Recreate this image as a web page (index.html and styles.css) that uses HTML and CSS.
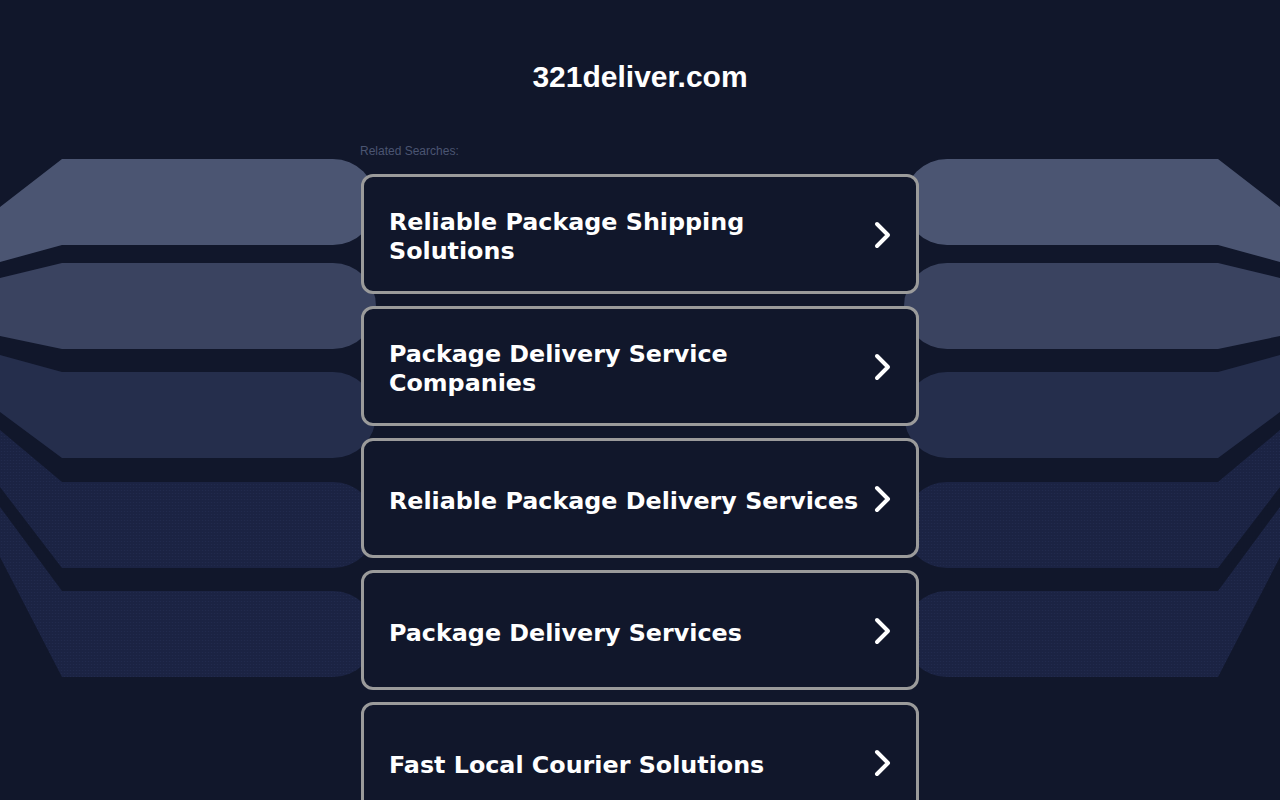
FILE: index.html
```html
<!DOCTYPE html>
<html>
<head>
	<meta charset="UTF-8">
	<title>321deliver.com</title>
	<link rel="stylesheet" href="styles.css">
</head>
<body>
	<svg class="backdrop" width="1280" height="800" viewBox="0 0 1280 800">
		<defs>
			<pattern id="dots" width="3" height="3" patternUnits="userSpaceOnUse">
				<rect width="3" height="3" fill="#1b2343"/>
				<circle cx="1.5" cy="1.5" r="0.6" fill="#222b4f"/>
			</pattern>
		</defs>
		<!-- left stack -->
		<path fill="#4b5572" d="M0 207 L62 159 L333 159 A43 43 0 0 1 333 245 L62 245 L0 262 Z"/>
		<path fill="#3a4360" d="M0 278 L62 263 L333 263 A43 43 0 0 1 333 349 L62 349 L0 336 Z"/>
		<path fill="#252e4c" d="M0 355 L62 372 L333 372 A43 43 0 0 1 333 458 L62 458 L0 412 Z"/>
		<path fill="url(#dots)" d="M0 430 L62 482 L333 482 A43 43 0 0 1 333 568 L62 568 L0 487 Z"/>
		<path fill="url(#dots)" d="M0 507 L62 591 L333 591 A43 43 0 0 1 333 677 L62 677 L0 557 Z"/>
		<!-- right stack -->
		<path fill="#4b5572" d="M1280 207 L1218 159 L947 159 A43 43 0 0 0 947 245 L1218 245 L1280 262 Z"/>
		<path fill="#3a4360" d="M1280 278 L1218 263 L947 263 A43 43 0 0 0 947 349 L1218 349 L1280 336 Z"/>
		<path fill="#252e4c" d="M1280 355 L1218 372 L947 372 A43 43 0 0 0 947 458 L1218 458 L1280 412 Z"/>
		<path fill="url(#dots)" d="M1280 430 L1218 482 L947 482 A43 43 0 0 0 947 568 L1218 568 L1280 487 Z"/>
		<path fill="url(#dots)" d="M1280 507 L1218 591 L947 591 A43 43 0 0 0 947 677 L1218 677 L1280 557 Z"/>
	</svg>

	<div class="page">
		<h1 class="domain">321deliver.com</h1>

		<div class="related">
			<div class="related-label">Related Searches:</div>

			<a class="search-card" href="#">
				<span class="search-text">Reliable Package Shipping Solutions</span>
				<svg class="chevron" width="18" height="28" viewBox="0 0 18 28"><path d="M3 3 L14 14 L3 25"/></svg>
			</a>
			<a class="search-card" href="#">
				<span class="search-text">Package Delivery Service Companies</span>
				<svg class="chevron" width="18" height="28" viewBox="0 0 18 28"><path d="M3 3 L14 14 L3 25"/></svg>
			</a>
			<a class="search-card" href="#">
				<span class="search-text">Reliable Package Delivery Services</span>
				<svg class="chevron" width="18" height="28" viewBox="0 0 18 28"><path d="M3 3 L14 14 L3 25"/></svg>
			</a>
			<a class="search-card" href="#">
				<span class="search-text">Package Delivery Services</span>
				<svg class="chevron" width="18" height="28" viewBox="0 0 18 28"><path d="M3 3 L14 14 L3 25"/></svg>
			</a>
			<a class="search-card" href="#">
				<span class="search-text">Fast Local Courier Solutions</span>
				<svg class="chevron" width="18" height="28" viewBox="0 0 18 28"><path d="M3 3 L14 14 L3 25"/></svg>
			</a>
		</div>
	</div>
</body>
</html>
```

FILE: styles.css
```css
html, body {
	margin: 0;
	height: 100%;
}

body {
	background-color: #11172b;
	font-family: "Liberation Sans", Arial, sans-serif;
	overflow: hidden;
	position: relative;
}

.backdrop {
	position: absolute;
	top: 0;
	left: 0;
	z-index: 0;
}

.page {
	position: relative;
	z-index: 1;
	padding-top: 60px;
}

.domain {
	margin: 0;
	text-align: center;
	color: #fff;
	font-size: 30px;
	line-height: 34px;
	font-weight: bold;
}

.related {
	width: 558px;
	margin: 50px auto 0;
}

.related-label {
	color: #4b5572;
	font-size: 12px;
	line-height: 14px;
	margin-left: -1px;
	margin-bottom: 16px;
}

.search-card {
	display: flex;
	align-items: center;
	gap: 5px;
	box-sizing: border-box;
	height: 120px;
	margin-bottom: 12px;
	padding: 6px 24px 0 25px;
	background-color: #11172b;
	border: 3px solid #9b9b9b;
	border-radius: 12px;
	text-decoration: none;
}

.search-text {
	flex: 1;
	color: #fff;
	font-family: "DejaVu Sans", Verdana, sans-serif;
	font-weight: bold;
	font-size: 23.8px;
	line-height: 29px;
}

.chevron {
	flex: none;
	margin-top: -4px;
}

.chevron path {
	fill: none;
	stroke: #fff;
	stroke-width: 4;
	stroke-linecap: round;
	stroke-linejoin: round;
}
```
